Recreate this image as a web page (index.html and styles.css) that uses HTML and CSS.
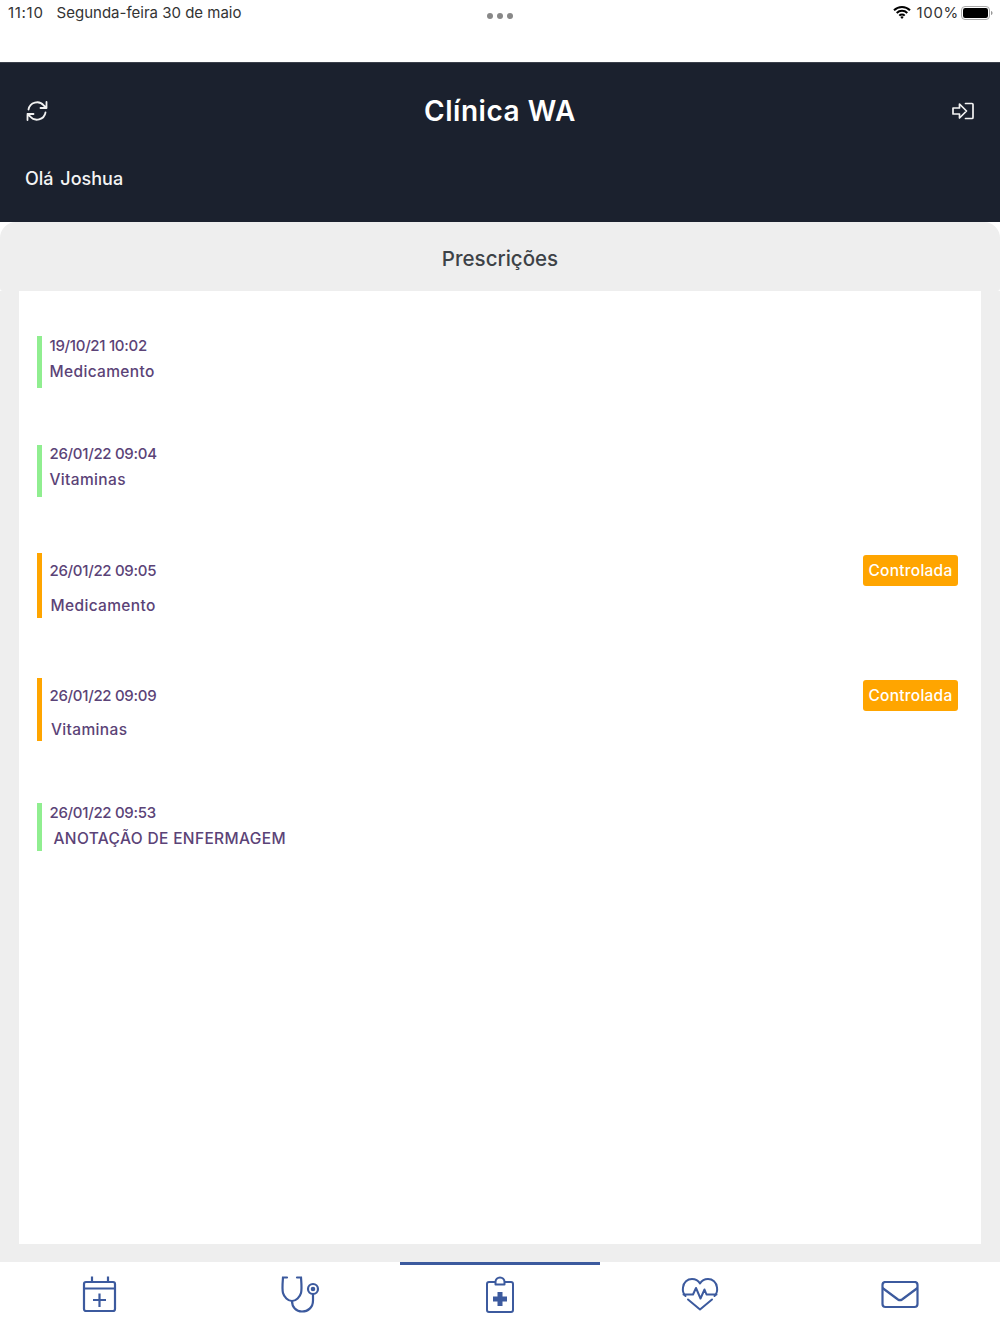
FILE: index.html
```html
<!DOCTYPE html>
<html lang="pt">
<head>
<meta charset="utf-8">
<title>Clínica WA</title>
<link rel="stylesheet" href="styles.css">
</head>
<body>
<div class="app">
  <div class="status">
    <div class="status-left"><span>11:10</span><span>Segunda-feira 30 de maio</span></div>
    <div class="dots"><i></i><i></i><i></i></div>
    <div class="status-right">
      <svg class="wifi" width="18" height="14" viewBox="0 0 18 14"><path d="M1 5.2a11.5 11.5 0 0 1 16 0M3.7 8a7.6 7.6 0 0 1 10.6 0M6.3 10.6a3.8 3.8 0 0 1 5.4 0" fill="none" stroke="#000" stroke-width="2"/><path d="M9 14l-1.7-2a2.4 2.4 0 0 1 3.4 0z"/></svg>
      <span>100%</span>
      <svg class="battery" width="32" height="14" viewBox="0 0 32 14"><rect x=".5" y=".5" width="28" height="13" rx="3.5" fill="#fff" stroke="#aaa"/><rect x="2" y="2" width="25" height="10" rx="2.2"/><path d="M30 5c1 .3 1.5 1 1.5 2s-.5 1.7-1.5 2z" fill="#999"/></svg>
    </div>
  </div>
  <header class="header">
    <div class="topbar">
      <svg class="hicon" width="24" height="24" viewBox="0 0 24 24" fill="none" stroke="#f2f2f2" stroke-width="1.8" stroke-linecap="round" stroke-linejoin="round"><path d="M3.5 10.5A8.7 8.7 0 0 1 18.8 6.5L21.5 9M21.5 3v6h-6"/><path d="M20.5 13.5A8.7 8.7 0 0 1 5.2 17.5L2.5 15M2.5 21v-6h6"/></svg>
      <h1>Clínica WA</h1>
      <svg class="hicon" width="24" height="24" viewBox="0 0 24 24" fill="none" stroke="#f2f2f2" stroke-width="1.7" stroke-linejoin="round" stroke-linecap="round"><path d="M2 9H8.5V5L15.5 12L8.5 19V15H2Z"/><path d="M14.5 4.5H21a1 1 0 0 1 1 1V18.5a1 1 0 0 1-1 1H14.5"/></svg>
    </div>
    <p class="hello">Olá Joshua</p>
  </header>
  <main class="panel">
    <h2>Prescrições</h2>
    <div class="panel-body">
      <section class="card">
        <article class="item green h52">
          <div class="text"><p class="date">19/10/21 10:02</p><p class="sub">Medicamento</p></div>
        </article>
        <article class="item green h52 g57 raised">
          <div class="text"><p class="date">26/01/22 09:04</p><p class="sub">Vitaminas</p></div>
        </article>
        <article class="item orange h65 g56">
          <div class="text"><p class="date">26/01/22 09:05</p><p class="sub wide">Medicamento</p></div>
          <span class="badge">Controlada</span>
        </article>
        <article class="item orange h63 g60">
          <div class="text"><p class="date">26/01/22 09:09</p><p class="sub wide vit">Vitaminas</p></div>
          <span class="badge">Controlada</span>
        </article>
        <article class="item green h48 g62">
          <div class="text"><p class="date">26/01/22 09:53</p><p class="sub note">ANOTAÇÃO DE ENFERMAGEM</p></div>
        </article>
      </section>
    </div>
  </main>
  <nav class="tabs">
    <a class="tab">
      <svg width="36" height="37" viewBox="0 0 36 37" fill="none" stroke="#3c5a9e" stroke-width="2.2" stroke-linejoin="round"><rect x="2" y="6" width="31" height="29" rx="2"/><path d="M2 12.5H33M10 .5V6M26 .5V6M17.5 17.5V31M11 24H24"/></svg>
    </a>
    <a class="tab">
      <svg width="40" height="38" viewBox="0 0 40 38" fill="none" stroke="#3c5a9e" stroke-width="2.2" stroke-linecap="round"><path d="M7 1.5H3C2.5 8 2 13 3 17c1 4 5 8 9 8s8-4 9-8c1-4 .5-9 0-15.5H17"/><path d="M12 25c0 6 4 10.5 10 10.5 6 0 11-4 11-11v-6"/><circle cx="33" cy="13" r="5"/><circle cx="33" cy="13" r="1.2" fill="#3c5a9e"/></svg>
    </a>
    <a class="tab active">
      <svg width="30" height="38" viewBox="0 0 30 38" fill="none" stroke="#3c5a9e" stroke-width="2" stroke-linejoin="round"><path d="M10.5 6H4a2 2 0 0 0-2 2V34a2 2 0 0 0 2 2H26a2 2 0 0 0 2-2V8a2 2 0 0 0-2-2H19.5"/><path d="M10.5 8.5V6a4.5 4.5 0 0 1 9 0V8.5Z"/><path d="M15 16V30M8 23H22" stroke-width="5"/></svg>
    </a>
    <a class="tab">
      <svg width="38" height="36" viewBox="0 0 38 36" fill="none" stroke="#3c5a9e" stroke-width="2" stroke-linecap="round" stroke-linejoin="round"><path d="M4.5 20C2 17.5 1.5 14.5 2 11.5 2.5 6 6.5 3 11 3c3.5 0 6.5 2 8 4.5C20.5 5 23.5 3 27 3c4.5 0 8.5 3 9 8.5.5 3 0 6-2.5 8.5"/><path d="M2.5 18.500H12l3-6.500 4.500 10.500 4-9 2 5h10"/><path d="M7 23.500 19 33.500 31 23.500"/></svg>
    </a>
    <a class="tab">
      <svg width="38" height="29" viewBox="0 0 38 29" fill="none" stroke="#3c5a9e" stroke-width="2.2" stroke-linejoin="round"><rect x="1.5" y="1" width="35" height="25" rx="3"/><path d="M1.5 7 17 18.500a3.500 3.500 0 0 0 4 0L36.500 7"/></svg>
    </a>
  </nav>
</div>
</body>
</html>
```
FILE: styles.css
```css
* { box-sizing: border-box; }
html, body { margin: 0; padding: 0; }
body { width: 1000px; height: 1334px; overflow: hidden; background: #fff; font-family: Inter, "Noto Sans", sans-serif; }
p, h1, h2 { margin: 0; font-weight: 500; }
.app { display: flex; flex-direction: column; height: 1334px; }

.status { height: 62px; flex: none; display: flex; justify-content: space-between; padding: 3px 7px 0 8px; position: relative; font-size: 15px; line-height: 20px; color: #333; }
.status-left { display: flex; gap: 13px; }
.status-left span:first-child { letter-spacing: .7px; }
.status-right { display: flex; align-items: flex-start; gap: 2px; }
.status-right span { letter-spacing: .7px; }
.status-right svg { margin-top: 3px; }
.status-right .wifi { margin-top: 2px; margin-right: 3px; }
.dots { position: absolute; left: 487px; top: 13px; display: flex; gap: 4px; }
.dots i { width: 6px; height: 6px; border-radius: 50%; background: #888; }

.header { height: 160px; flex: none; background: #1b212e; padding: 37px 25px 0; color: #f4f4f4; border-top: 1px solid #3b404b; }
.topbar { display: flex; justify-content: space-between; align-items: center; height: 24px; margin-top: -1px; }
.topbar h1 { font-size: 28px; line-height: 24px; font-weight: 600; color: #fff; letter-spacing: .55px; }
.hicon { flex: none; }
.hello { margin-top: 44px; font-size: 18px; line-height: 24px; word-spacing: 2px; }

.panel { flex: 1; background: #fff; display: flex; flex-direction: column; min-height: 0; }
.panel h2 { height: 69px; flex: none; background: #eee; border-radius: 16px 16px 3px 3px; text-align: center; font-size: 20.5px; line-height: 74px; color: #3d4247; }
.panel-body { flex: 1; background: #eee; padding: 0 19px 18px; display: flex; min-height: 0; }
.card { flex: 1; background: #fff; padding: 45px 23px 0 18px; }

.item { display: flex; justify-content: space-between; align-items: flex-start; border-left: 5px solid; padding-left: 8px; color: #5b4377; }
.green { border-color: #90ee90; }
.orange { border-color: #ffa500; }
.h52 { height: 52px; }
.h65 { height: 65px; }
.h63 { height: 63px; }
.h48 { height: 48px; }
.g57 { margin-top: 57px; }
.g56 { margin-top: 56px; }
.g60 { margin-top: 60px; }
.g62 { margin-top: 62px; }

.text { padding-top: 1px; margin-left: -.5px; }
.text p { font-size: 15.5px; line-height: 18px; white-space: nowrap; letter-spacing: .35px; }
.text .date { font-size: 15px; letter-spacing: -.3px; }
.h65 .text, .h63 .text { padding-top: 9px; }
.raised .text { padding-top: 0; }
.text .sub { margin-top: 8px; }
.text .wide { margin-top: 17px; margin-left: 1px; }
.text .vit { margin-top: 16px; margin-left: 1.5px; }
.text .note { margin-left: 4px; }

.badge { margin-top: 2px; width: 95px; height: 31px; background: #ffa500; border-radius: 3px; color: #fff; font-size: 15.5px; line-height: 31px; text-align: center; font-weight: 500; letter-spacing: .25px; }

.tabs { height: 72px; flex: none; display: flex; background: #fff; }
.tab { flex: 1; display: flex; justify-content: center; padding-top: 11px; border-top: 3px solid transparent; }
.tab.active { border-top-color: #3c5a9e; }
.tab svg { display: block; }
.tab:last-child svg { margin-top: 5px; }
```
